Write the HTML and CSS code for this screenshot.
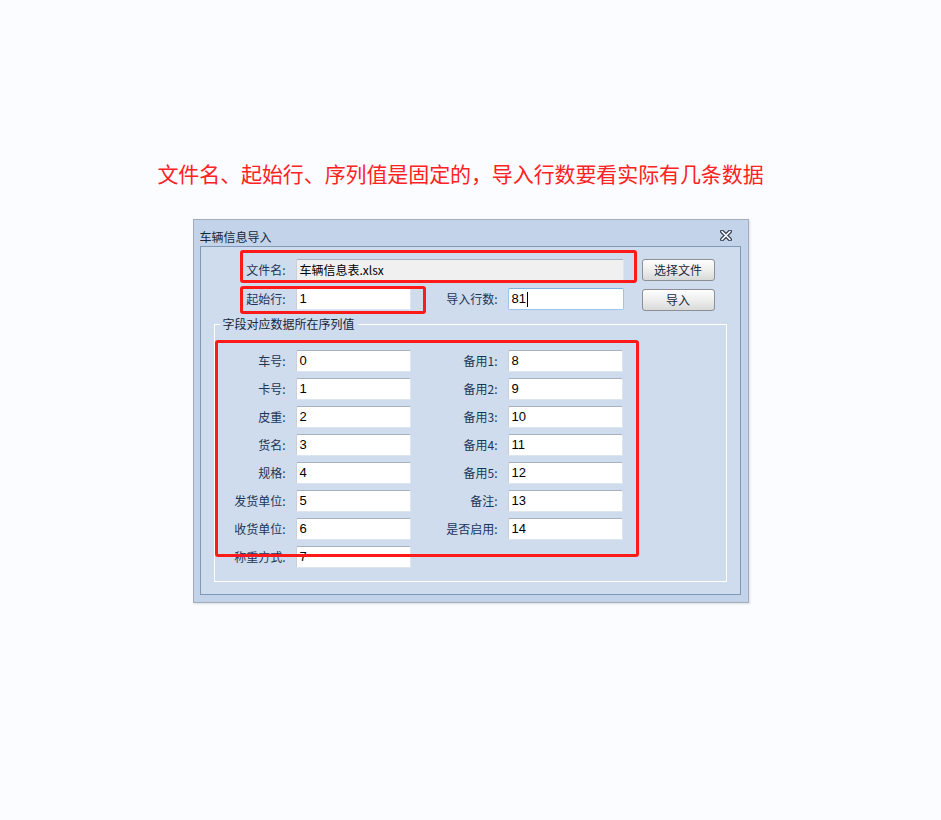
FILE: index.html
```html
<!DOCTYPE html>
<html lang="zh">
<head>
<meta charset="utf-8">
<title>车辆信息导入</title>
<link rel="stylesheet" href="styles.css">
</head>
<body>
<div class="page">
  <h1 class="note">文件名、起始行、序列值是固定的，导入行数要看实际有几条数据</h1>
  <div class="dialog">
    <div class="titlebar">
      <span class="title">车辆信息导入</span>
      <svg class="close" width="12" height="11" viewBox="0 0 12 11">
        <path d="M2 1.5 L10 9.5 M10 1.5 L2 9.5" stroke="#3a4658" stroke-width="4" stroke-linecap="round"/>
        <path d="M2 1.5 L10 9.5 M10 1.5 L2 9.5" stroke="#ffffff" stroke-width="1.6" stroke-linecap="round"/>
      </svg>
    </div>
    <div class="panel">
      <div class="row">
        <span class="lbl lbl-a">文件名:</span>
        <div class="field field-wide readonly">车辆信息表.xlsx</div>
        <button class="btn">选择文件</button>
      </div>
      <div class="row row2">
        <span class="lbl lbl-a">起始行:</span>
        <div class="field">1</div>
        <span class="lbl lbl-b">导入行数:</span>
        <div class="field field-b focus">81<span class="caret"></span></div>
        <button class="btn btn-low">导入</button>
      </div>
      <div class="group">
        <div class="legend"><span>字段对应数据所在序列值</span></div>
        <div class="grid">
          <span class="lbl">车号:</span><div class="field">0</div>
          <span class="lbl">备用1:</span><div class="field">8</div>
          <span class="lbl">卡号:</span><div class="field">1</div>
          <span class="lbl">备用2:</span><div class="field">9</div>
          <span class="lbl">皮重:</span><div class="field">2</div>
          <span class="lbl">备用3:</span><div class="field">10</div>
          <span class="lbl">货名:</span><div class="field">3</div>
          <span class="lbl">备用4:</span><div class="field">11</div>
          <span class="lbl">规格:</span><div class="field">4</div>
          <span class="lbl">备用5:</span><div class="field">12</div>
          <span class="lbl">发货单位:</span><div class="field">5</div>
          <span class="lbl">备注:</span><div class="field">13</div>
          <span class="lbl">收货单位:</span><div class="field">6</div>
          <span class="lbl">是否启用:</span><div class="field">14</div>
          <span class="lbl">称重方式:</span><div class="field">7</div>
        </div>
      </div>
    </div>
    <div class="mark mark1"></div>
    <div class="mark mark2"></div>
    <div class="mark mark3"></div>
  </div>
</div>
</body>
</html>
```

FILE: styles.css
```css
* { box-sizing: border-box; }
html, body { margin: 0; padding: 0; }
body {
  background: #fafcff;
  font-family: "Noto Sans CJK SC", "Liberation Sans", sans-serif;
  width: 941px;
  height: 820px;
  overflow: hidden;
}
.page {
  display: flex;
  flex-direction: column;
  align-items: center;
  padding-top: 158px;
}
.note {
  margin: 0;
  width: 941px;
  padding-right: 20px;
  text-align: center;
  font-size: 21px;
  line-height: 30px;
  font-weight: normal;
  color: #ff2222;
  letter-spacing: -0.1px;
}
.dialog {
  position: relative;
  margin-top: 31px;
  width: 556px;
  border: 1px solid #a3acb8;
  background: #c3d4ea;
  padding: 0 7px 7px 6px;
  box-shadow: 1px 1px 2px rgba(120, 130, 150, 0.25);
}
.titlebar {
  height: 26px;
  display: flex;
  align-items: flex-start;
  justify-content: space-between;
  padding: 10px 9px 0 0;
}
.title {
  font-size: 12px;
  line-height: 14px;
  color: #17263c;
}
.close { display: block; }
.panel {
  border: 1px solid #7f98b5;
  background: #cfdcee;
  padding: 12px 0 12px 0;
}
.row {
  display: flex;
  align-items: flex-start;
  height: 22px;
}
.row2 { margin-top: 7px; }
.lbl {
  font-size: 12px;
  color: #1c3456;
  text-align: right;
  padding-right: 10px;
  white-space: nowrap;
  line-height: 22px;
}
.lbl-a { width: 95px; }
.lbl-b { width: 97px; }
.field {
  width: 115px;
  height: 22px;
  background: #fff;
  border: 1px solid #dfe5ee;
  border-top-color: #a8b0bd;
  border-left-color: #c9d0da;
  border-radius: 2px;
  font-family: "Liberation Sans", "Noto Sans CJK SC", sans-serif;
  font-size: 13px;
  line-height: 20px;
  color: #000;
  padding-left: 3px;
  display: flex;
  align-items: center;
}
.field-wide {
  width: 328px;
  font-family: "Noto Sans CJK SC", "Liberation Sans", sans-serif;
  font-size: 12px;
}
.readonly { background: #f0f0f0; }
.field-b { width: 116px; }
.focus {
  border-color: #9cc4ec;
  border-top-color: #7fb0e2;
}
.caret {
  display: inline-block;
  width: 1px;
  height: 15px;
  background: #000;
  margin-left: 1px;
}
.btn {
  margin-left: 18px;
  width: 73px;
  height: 22px;
  border: 1px solid #8c8f94;
  border-radius: 3px;
  background: linear-gradient(#fefefe, #eeeeee 50%, #d9d9d9);
  font-family: "Noto Sans CJK SC", sans-serif;
  font-size: 12px;
  color: #1a2a40;
  padding: 0;
  line-height: 20px;
}
.btn-low { margin-top: 1px; }
.group {
  margin: 14px 13px 0 13px;
  border: 1px solid #ffffff;
  padding: 0 0 13px 0;
}
.legend {
  margin-top: -9px;
  padding-left: 5px;
  display: flex;
}
.legend span {
  background: #cfdcee;
  padding: 0 3px;
  font-size: 12px;
  line-height: 16px;
  color: #17263c;
}
.grid {
  margin-top: 18px;
  display: grid;
  grid-template-columns: 81px 115px 97px 115px;
  row-gap: 6px;
  grid-auto-rows: 22px;
}
.mark {
  position: absolute;
  border: 3px solid #ff1a1a;
  border-radius: 3px;
}
.mark1 { left: 46px; top: 30px; width: 397px; height: 33px; }
.mark2 { left: 46px; top: 66px; width: 186px; height: 28px; }
.mark3 { left: 21px; top: 120px; width: 424px; height: 217px; }
```
